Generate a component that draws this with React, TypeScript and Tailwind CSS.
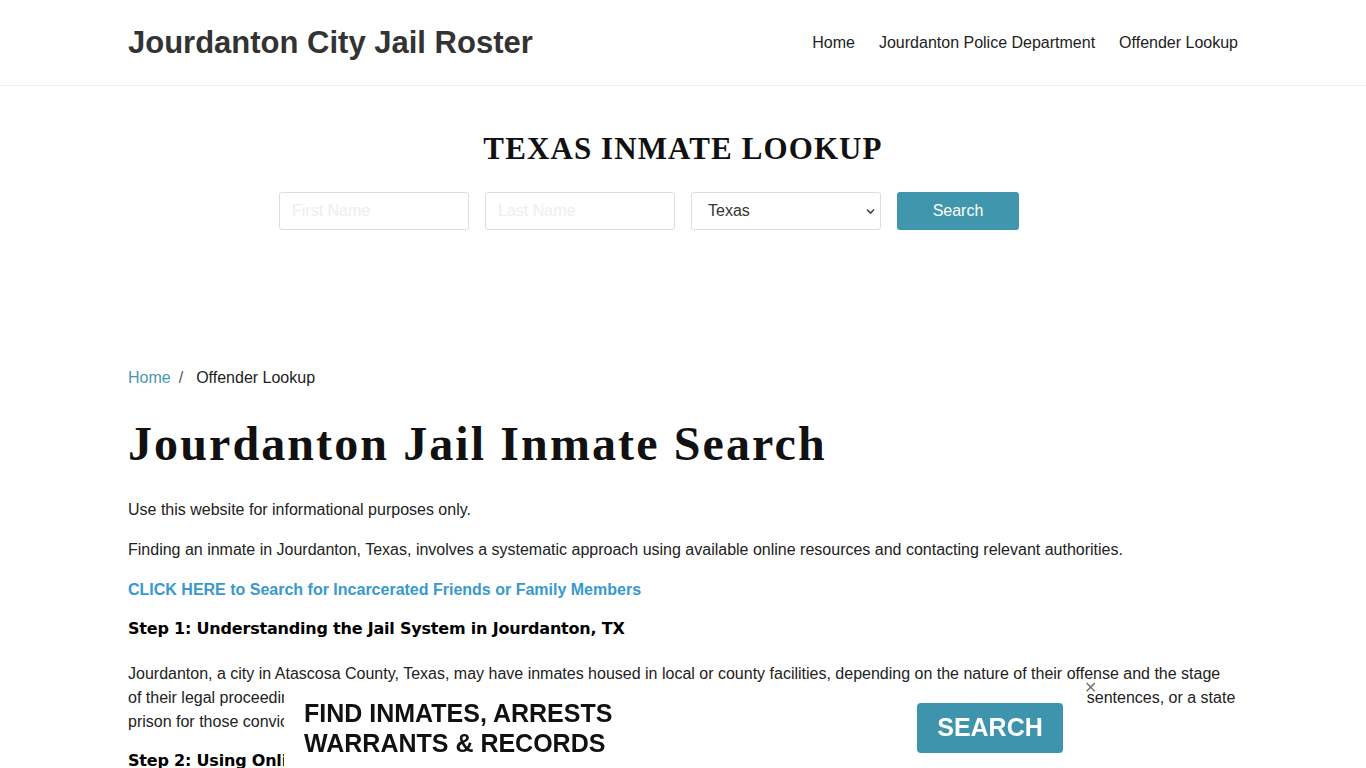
import React from 'react';

const sans = "font-['Liberation_Sans',Arial,sans-serif]";
const serif = "font-['Liberation_Serif','Times_New_Roman',serif]";
const heavy = "font-['DejaVu_Sans',Verdana,sans-serif]";

const Header = () => (
  <header className="border-b border-[#f0f0f0] bg-white">
    <div className="mx-auto flex h-[85px] w-[1110px] items-center justify-between">
      <a className="text-[31px] font-bold text-[#333] leading-none">Jourdanton City Jail Roster</a>
      <nav className="flex items-center gap-6 text-[16px] text-[#222]">
        <a>Home</a>
        <a>Jourdanton Police Department</a>
        <a>Offender Lookup</a>
      </nav>
    </div>
  </header>
);

const SearchForm = () => (
  <section className="mx-auto w-[1110px] pt-[47px] pb-[136px]">
    <h2 className={`${serif} text-center text-[31px] font-bold leading-none tracking-[1.1px] text-[#111]`}>
      TEXAS INMATE LOOKUP
    </h2>
    <form className="ml-[151px] mt-[28px] flex gap-4">
      <input
        placeholder="First Name"
        className="h-[38px] w-[190px] rounded-[3px] border border-[#ddd] px-3 text-[16px] placeholder:text-[#eee]"
      />
      <input
        placeholder="Last Name"
        className="h-[38px] w-[190px] rounded-[3px] border border-[#ddd] px-3 text-[16px] placeholder:text-[#eee]"
      />
      <div className="relative h-[38px] w-[190px] rounded-[3px] border border-[#ddd] bg-white">
        <span className="absolute left-4 top-[6px] text-[16px] text-[#333]">Texas</span>
        <svg className="absolute right-[5px] top-[15px]" width="9" height="7" viewBox="0 0 9 7">
          <path d="M1 1.5l3.5 3.5 3.5-3.5" stroke="#444" strokeWidth="1.6" fill="none" />
        </svg>
      </div>
      <button type="button" className="h-[38px] w-[122px] rounded-[3px] bg-[#4097ad] text-[16px] text-white">
        Search
      </button>
    </form>
  </section>
);

const Content = () => (
  <main className="mx-auto w-[1110px] pb-[160px] text-[16px] leading-[24px] text-[#222]">
    <div className="flex items-center">
      <a className="text-[#4a97ad]">Home</a>
      <span className="px-2 text-[#555]">/</span>
      <span className="pl-[5px]">Offender Lookup</span>
    </div>
    <h1 className={`${serif} mt-[29px] text-[48px] font-bold leading-[50px] tracking-[2.1px] text-[#111]`}>
      Jourdanton Jail Inmate Search
    </h1>
    <p className="mt-[29px]">Use this website for informational purposes only.</p>
    <p className="mt-4">
      Finding an inmate in Jourdanton, Texas, involves a systematic approach using available online resources and contacting relevant authorities.
    </p>
    <p className="mt-4">
      <a className="font-bold text-[#3899cf]">CLICK HERE to Search for Incarcerated Friends or Family Members</a>
    </p>
    <h3 className={`${heavy} mt-[15px] font-bold tracking-[-0.2px] text-black`}>Step 1: Understanding the Jail System in Jourdanton, TX</h3>
    <p className="mt-[21px]">
      Jourdanton, a city in Atascosa County, Texas, may have inmates housed in local or county facilities, depending on the nature of their offense and the stage of their legal proceedings. Local jails typically hold those awaiting trial or serving short sentences, county jails hold those serving longer sentences, or a state prison for those convicted of serious crimes and sentenced to longer terms of incarceration.
    </p>
    <h3 className={`${heavy} mt-[15px] font-bold tracking-[-0.2px] text-black`}>Step 2: Using Online Resources</h3>
  </main>
);

const AdBanner = () => (
  <div className="fixed bottom-0 left-[284px] h-[84px] w-[798px] bg-white">
    <div className="flex h-full items-center justify-between pl-5 pr-[19px]">
      <div className="mt-[4px] text-[25px] font-bold leading-[30px] text-[#111]">
        <div>FIND INMATES, ARRESTS</div>
        <div>WARRANTS &amp; RECORDS</div>
      </div>
      <button type="button" className="mt-[4px] h-[50px] w-[146px] rounded-[4px] bg-[#3e94ac] text-[25px] font-bold text-white">
        SEARCH
      </button>
    </div>
    <button type="button" className="absolute right-[-15px] top-[-4px] text-[16px] leading-none text-[#777]">
      ✕
    </button>
  </div>
);

export default function App() {
  return (
    <div className={`${sans} min-h-screen bg-white`}>
      <Header />
      <SearchForm />
      <Content />
      <AdBanner />
    </div>
  );
}
